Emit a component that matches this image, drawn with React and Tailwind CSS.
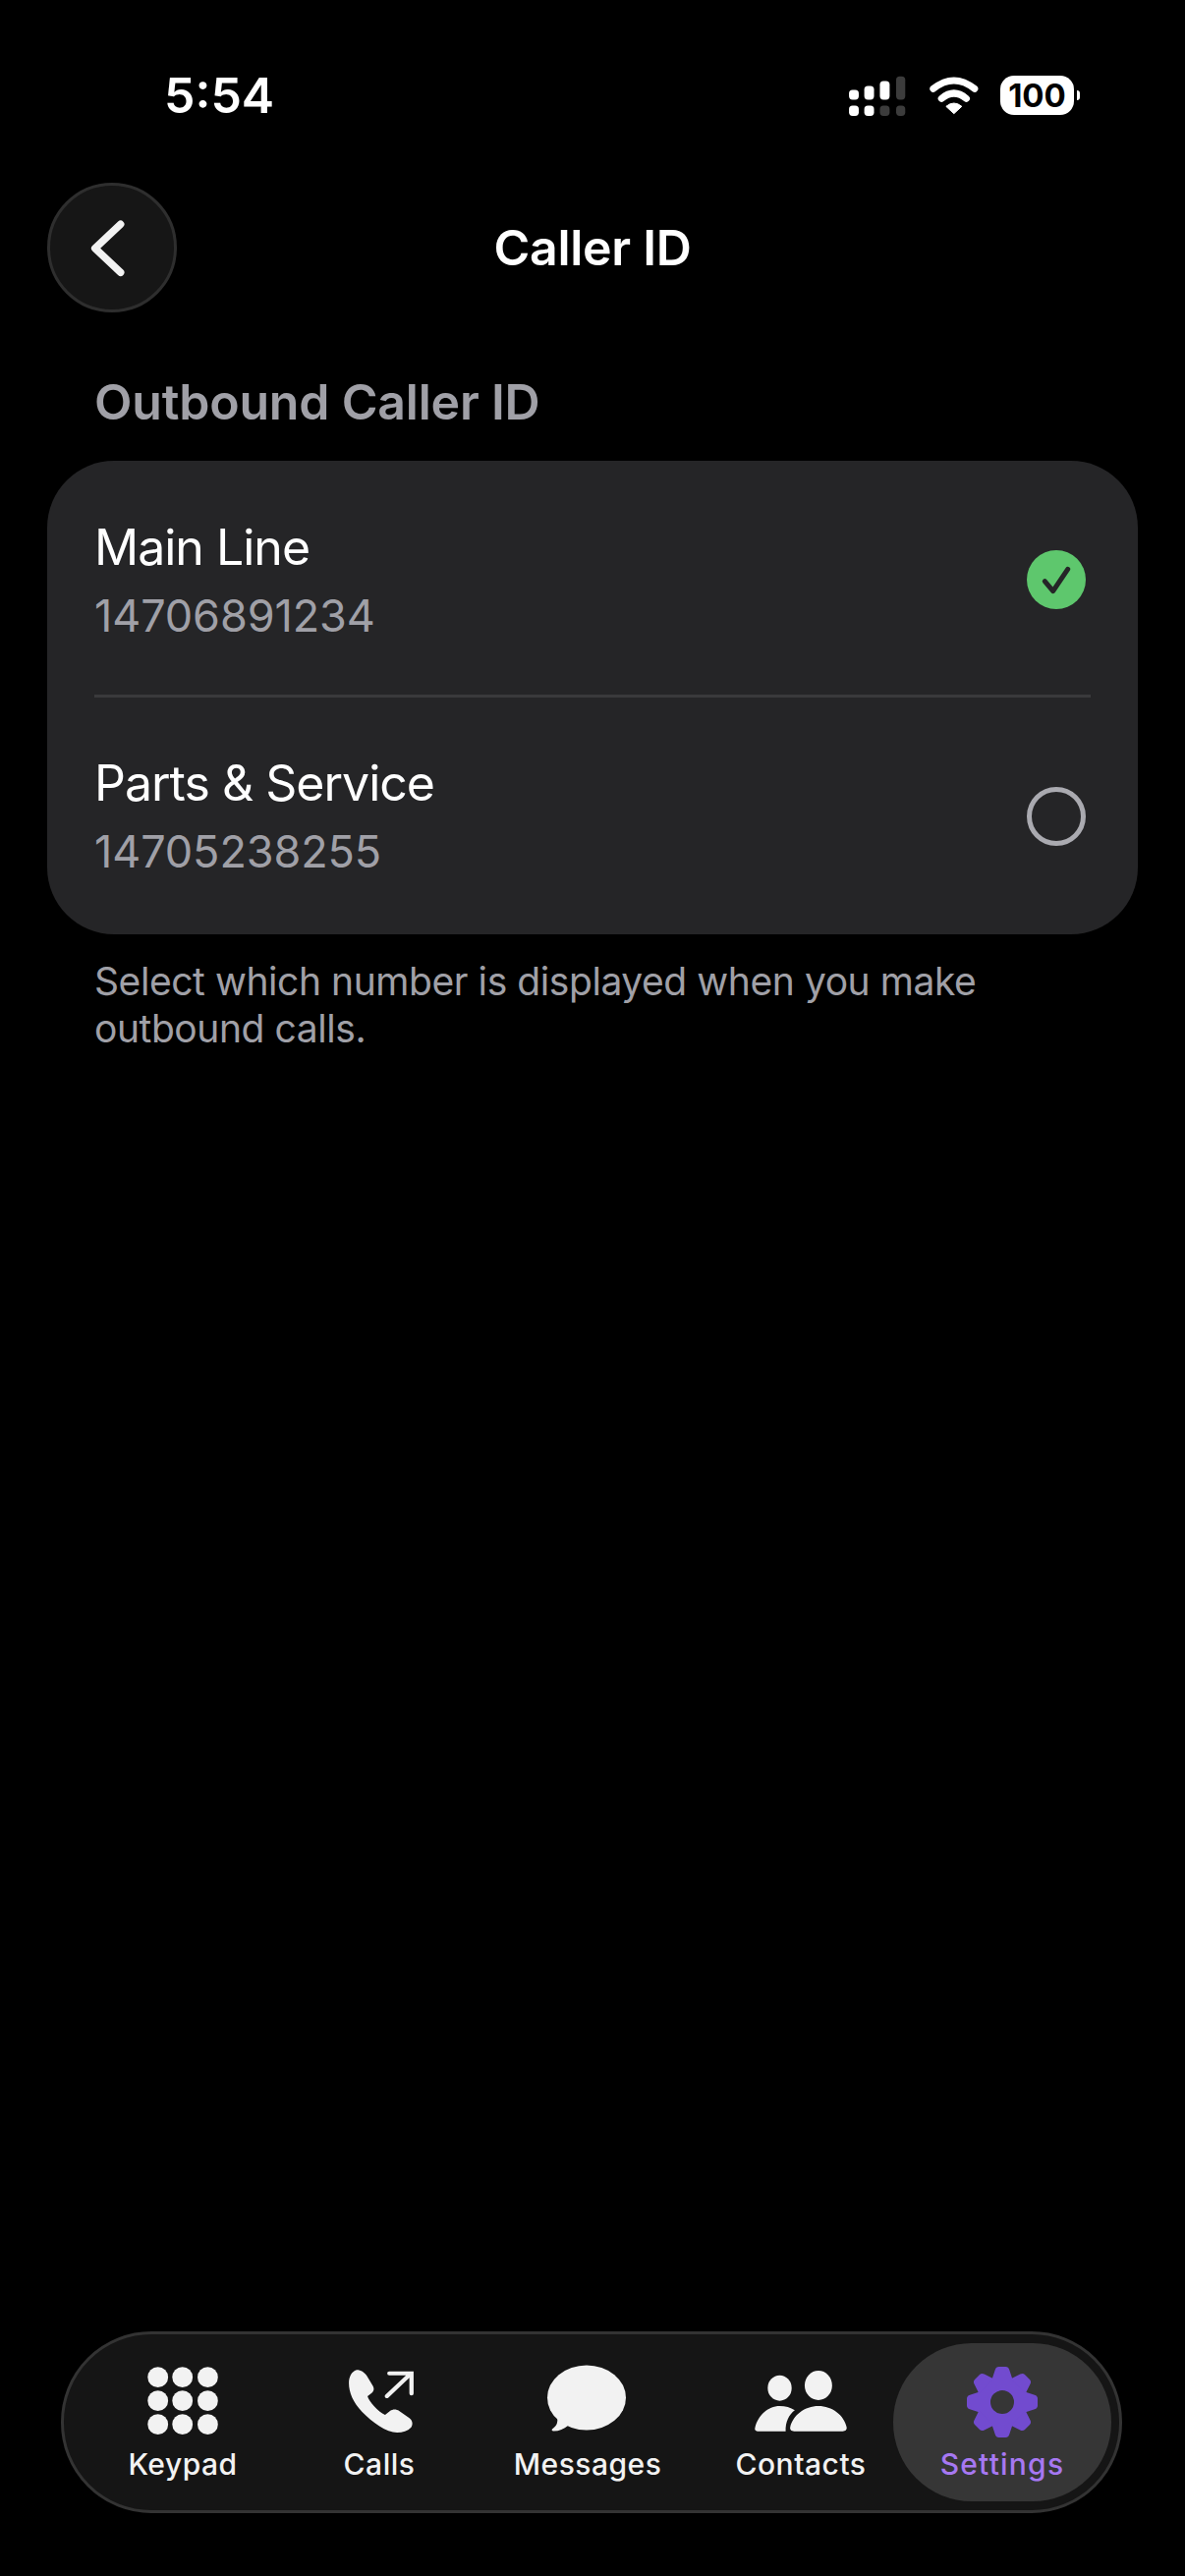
function Signal() {
  return (
    <svg width="62" height="43" viewBox="70 45 185 130" className="shrink-0">
      {[[75,92],[122,80],[170,65]].map(([x,y]) => <rect key={x} x={x} y={y} width="30" height={122-y} rx="11" fill="#fff" />)}
      <rect x="220" y="50" width="28" height="72" rx="11" fill="#3c3c3c" />
      <rect x="75" y="140" width="30" height="32" rx="11" fill="#fff" />
      <rect x="122" y="140" width="30" height="32" rx="11" fill="#fff" />
      <rect x="170" y="140" width="30" height="32" rx="11" fill="#3c3c3c" />
      <rect x="220" y="140" width="28" height="32" rx="11" fill="#3c3c3c" />
    </svg>
  );
}

function Wifi() {
  return (
    <svg width="52" height="40" viewBox="315 52 155 120" className="shrink-0">
      <path d="M329 92 Q392 42 455 92" stroke="#fff" strokeWidth="21" fill="none" strokeLinecap="round" />
      <path d="M354 122 Q392 90 430 122" stroke="#fff" strokeWidth="21" fill="none" strokeLinecap="round" />
      <path d="M368 146 Q392 126 416 146 L392 168 Z" fill="#fff" stroke="#fff" strokeWidth="3" strokeLinejoin="round" />
    </svg>
  );
}

function Keypad() {
  const xs = [25.7, 50.7, 76.4];
  const ys = [10.7, 34.7, 58.7];
  return (
    <svg width="102" height="70" viewBox="0 0 102 70">
      {ys.map((y) => xs.map((x) => <circle key={`${x}-${y}`} cx={x} cy={y} r="10.4" fill="#f2f2f2" />))}
    </svg>
  );
}

function CallsIcon() {
  return (
    <svg width="68" height="70" viewBox="880 150 190 210" preserveAspectRatio="none" className="ml-[4px]">
      <path fill="#f2f2f2" d="M905 160 C918 160 928 168 934 178 L950 206 C956 216 955 224 947 231 L936 240 C940 256 966 288 986 297 L1000 285 C1008 279 1018 279 1026 285 L1055 307 C1064 314 1066 326 1060 335 C1050 346 1036 351 1020 351 C990 351 950 320 920 287 C895 258 883 228 883 200 C883 182 890 165 905 160 Z" />
      <path d="M991 240 L1058 172 M998 170 L1061 170 L1061 232" stroke="#f2f2f2" strokeWidth="12" fill="none" strokeLinecap="round" strokeLinejoin="miter" />
    </svg>
  );
}

function MessageIcon() {
  return (
    <svg width="84" height="70" viewBox="0 0 84 70" className="overflow-visible">
      <ellipse cx="41" cy="31.5" rx="40" ry="33" fill="#f2f2f2" />
      <path d="M11 50 C12 56 11 60 6.5 63 C5 64 5.5 65.5 7.5 65.5 C13 65.5 18 63.5 22 60 Z" fill="#f2f2f2" />
    </svg>
  );
}

function ContactsIcon() {
  return (
    <svg width="96" height="70" viewBox="470 150 268 210" preserveAspectRatio="none">
      <ellipse cx="544" cy="215" rx="34" ry="39" fill="#f2f2f2" />
      <ellipse cx="654" cy="207" rx="39" ry="45" fill="#f2f2f2" />
      <path d="M481 347 C475 347 472 342 474 336 C482 300 510 270 544 270 C560 270 575 274 587 283 C570 296 560 320 561 347 Z" fill="#f2f2f2" />
      <path d="M585 347 C577 347 572 342 574 334 C582 298 615 270 654 270 C693 270 727 298 734 334 C736 342 731 347 723 347 Z" fill="#f2f2f2" />
    </svg>
  );
}

function Gear() {
  return (
    <svg width="74" height="74" viewBox="-37 -37 74 74">
      <circle r="19" stroke="#724bcf" strokeWidth="14" fill="none" />
      {[0, 45, 90, 135, 180, 225, 270, 315].map((a) => (
        <path key={a} d="M-10.5 -23 L-7.2 -33 Q-6.3 -36 -3.5 -36 L3.5 -36 Q6.3 -36 7.2 -33 L10.5 -23 Z" fill="#724bcf" transform={`rotate(${a})`} />
      ))}
    </svg>
  );
}

function Tab({ w, icon, label }) {
  return (
    <div className={`flex flex-col items-center shrink-0 self-start pt-[33px] ${w}`}>
      {icon}
      <span className="mt-[9px] text-[30px] leading-[40px] font-medium tracking-[0.5px] text-[#f2f2f2]">{label}</span>
    </div>
  );
}

function Row({ name, number, selected, rowClass }) {
  return (
    <div className={`flex items-center justify-between px-[48px] ${rowClass}`}>
      <div className="flex flex-col pt-[3px]">
        <span className="text-[50px] leading-[70px] tracking-[-1px] text-white">{name}</span>
        <span className="text-[45px] leading-[70px] tracking-[-0.1px] text-[#a0a0a7]">{number}</span>
      </div>
      {selected ? (
        <div className="w-[60px] h-[60px] rounded-full bg-[#5ec76d] mr-[5px]">
          <svg width="60" height="60" viewBox="0 0 60 60">
            <path d="M18.3 31.7 L26.7 41.7 L41.7 19.3" stroke="#252527" strokeWidth="5" fill="none" strokeLinecap="round" strokeLinejoin="round" />
          </svg>
        </div>
      ) : (
        <div className="w-[60px] h-[60px] rounded-full border-[5px] border-[#aaaab0] mr-[5px]" />
      )}
    </div>
  );
}

export default function App() {
  return (
    <div className="w-[1206px] h-[2622px] bg-black flex flex-col font-['Inter',sans-serif] overflow-hidden">
      <div className="flex items-center justify-between h-[44px] mt-[75px] pl-[167px] pr-[107px]">
        <span className="text-[50px] leading-[44px] font-semibold text-white">5:54</span>
        <div className="flex items-center gap-[21px]">
          <Signal />
          <Wifi />
          <div className="flex items-center gap-[3px]">
            <div className="w-[75px] h-[40px] rounded-[14px] bg-white flex items-center justify-center text-[33px] leading-[40px] font-bold text-black">100</div>
            <div className="w-[3px] h-[10px] rounded-r-full bg-white" />
          </div>
        </div>
      </div>

      <div className="grid grid-cols-[132px_1fr_132px] items-center mx-[48px] mt-[67px]">
        <div className="w-[132px] h-[132px] rounded-full bg-[#161616] border-[3px] border-[#2e2e2e]">
          <svg width="126" height="126" viewBox="3 3 126 126">
            <path d="M74.7 42.3 L48.7 66.7 L74.7 91.3" stroke="#f2f2f2" strokeWidth="7.5" fill="none" strokeLinecap="round" strokeLinejoin="round" />
          </svg>
        </div>
        <h1 className="text-center text-[50px] leading-[60px] tracking-[-0.3px] font-semibold text-white">Caller ID</h1>
        <div />
      </div>

      <h2 className="mt-[61px] ml-[96px] text-[50px] leading-[60px] tracking-[-0.2px] font-semibold text-[#a0a0a7]">Outbound Caller ID</h2>

      <div className="mt-[30px] mx-[48px] rounded-[68px] bg-[#252527]">
        <Row name="Main Line" number="14706891234" selected rowClass="h-[238px] pt-[4px]" />
        <div className="mx-[48px] h-[3px] bg-[#3a3a3c]" />
        <Row name="Parts & Service" number="14705238255" rowClass="h-[241px]" />
      </div>

      <p className="mt-[24px] ml-[96px] w-[960px] text-[39px] leading-[48px] tracking-[-0.43px] text-[#a0a0a7]">Select which number is displayed when you make outbound calls.</p>

      <div className="mt-auto mb-[64px] ml-[62px] mr-[64px] h-[185px] rounded-[92px] bg-[#151515] border-[3px] border-[#333333] flex items-center pl-[9px]">
        <Tab w="w-[224px]" icon={<Keypad />} label="Keypad" />
        <Tab w="w-[176px]" icon={<CallsIcon />} label="Calls" />
        <Tab w="w-[248px]" icon={<MessageIcon />} label="Messages" />
        <Tab w="w-[186px]" icon={<ContactsIcon />} label="Contacts" />
        <div className="ml-[1px] w-[222px] h-[161px] rounded-[80px] bg-[#363636] flex flex-col items-center pt-[23px]">
          <Gear />
          <span className="mt-[6px] text-[30px] leading-[40px] font-medium tracking-[1.2px] text-[#a678f2]">Settings</span>
        </div>
      </div>
    </div>
  );
}
